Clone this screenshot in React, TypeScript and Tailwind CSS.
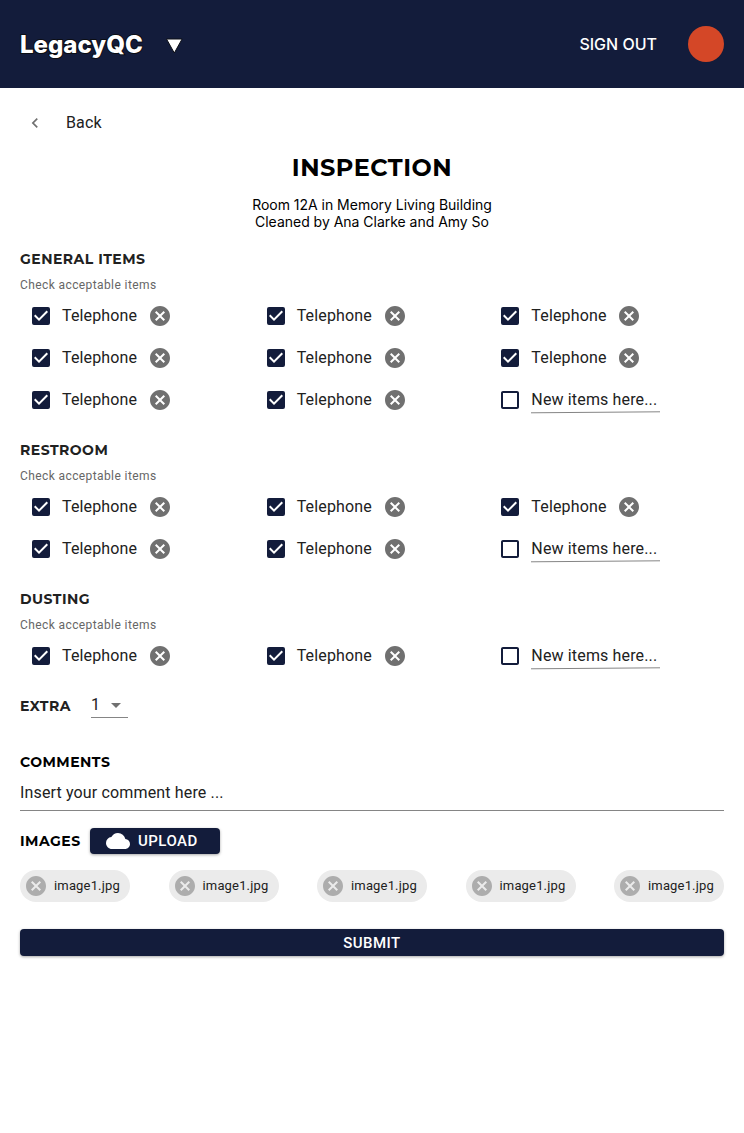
import React from "react";
import {
  MdArrowDropDown,
  MdCancel,
  MdCheckBox,
  MdCheckBoxOutlineBlank,
  MdChevronLeft,
  MdCloud,
} from "react-icons/md";

const heading =
  "font-['Montserrat','Inter',sans-serif] text-[14px] font-bold tracking-[0.48px] whitespace-nowrap";

function CheckedItem() {
  return (
    <div className="flex h-[42px] items-center">
      <span className="p-[9px]">
        <MdCheckBox className="size-6 text-[#131c3b]" />
      </span>
      <span className="w-[86px] text-[16px] leading-6 tracking-[0.15px]">Telephone</span>
      <MdCancel className="size-6 text-[#707070]" />
    </div>
  );
}

function NewItem() {
  return (
    <div className="flex h-[42px] items-center">
      <span className="p-[9px]">
        <MdCheckBoxOutlineBlank className="size-6 text-[#131c3b]" />
      </span>
      <div className="flex h-[42px] flex-col pt-[9px]">
        <span className="text-[16px] leading-6 tracking-[0.15px]">New items here...</span>
        <svg className="-mt-px h-[3px] w-[129px]" viewBox="0 0 129 3" fill="none">
          <path d="M0 1.8 129 0.8" stroke="#858585" />
        </svg>
      </div>
    </div>
  );
}

function Section({ title, count }: { title: string; count: number }) {
  return (
    <section className="mb-[19px]">
      <h2 className={`${heading} leading-5`}>{title}</h2>
      <p className="mt-1.5 mb-0 h-5 text-[12px] leading-5 tracking-[0.4px] text-[#666]">
        Check acceptable items
      </p>
      <div className="grid grid-cols-3">
        {Array.from({ length: count }, (_, i) => (
          <CheckedItem key={i} />
        ))}
        <NewItem />
      </div>
    </section>
  );
}

export default function App() {
  return (
    <div className="min-h-[1133px] bg-white font-['Roboto',sans-serif] text-[#212121]">
      <header className="flex h-[88px] items-center justify-between bg-[#131c3b] px-5 font-['Inter',sans-serif] text-white">
        <div className="flex items-center gap-[22px]">
          <span className="pt-px text-[24px] leading-[30px] font-extrabold [paint-order:stroke_fill] [-webkit-text-stroke:2px_#0c0e14]">
            LegacyQC
          </span>
          <svg className="mt-1 h-4 w-[18px]" viewBox="0 0 18 16">
            <path d="M1.5 1h15.6L9.3 15Z" fill="white" stroke="#0c0e14" />
          </svg>
        </div>
        <div className="flex items-center gap-[31px]">
          <span className="text-[16px] font-medium">SIGN OUT</span>
          <span className="size-9 rounded-full bg-[#d44727]" />
        </div>
      </header>

      <main className="px-5">
        <div className="flex h-[69px] items-center pl-[5px]">
          <MdChevronLeft className="size-5 text-[#707070]" />
          <span className="pl-[21px] text-[16px] leading-6 tracking-[0.15px]">Back</span>
        </div>

        <div className="-mt-1 text-center text-black">
          <h1 className="font-['Montserrat','Inter',sans-serif] text-[24px] leading-[30px] font-bold tracking-[0.5px]">
            INSPECTION
          </h1>
          <p className="mt-[13px] font-['Inter',sans-serif] text-[14px] leading-[17px] tracking-[-0.02px]">
            Room 12A in Memory Living Building
            <br />
            Cleaned by Ana Clarke and Amy So
          </p>
        </div>

        <div className="mt-[19px]">
          <Section title="GENERAL ITEMS" count={8} />
          <Section title="RESTROOM" count={5} />
          <Section title="DUSTING" count={2} />
        </div>

        <div className="flex h-[22px] items-start gap-5">
          <h2 className={`${heading} w-[51px] pt-px leading-[18px]`}>EXTRA</h2>
          <div className="flex h-[22px] w-[37px] items-start border-b border-[#858585]">
            <span className="w-[13px] text-[16px] leading-[18px]">1</span>
            <MdArrowDropDown className="-mt-[3px] size-6 shrink-0 text-[#707070]" />
          </div>
        </div>

        <h2 className={`${heading} mt-[34px] leading-5 text-black`}>COMMENTS</h2>
        <div className="mt-2 h-[31px] border-b border-[#858585] text-[16px] leading-[26px] tracking-[0.15px]">
          Insert your comment here ...
        </div>

        <div className="mt-[17px] flex h-[26px] items-center">
          <h2 className={`${heading} w-[70px] text-black`}>IMAGES</h2>
          <button className="flex h-[26px] w-[130px] items-center rounded bg-[#131c3b] pl-4 text-[15px] font-medium tracking-[0.46px] text-white shadow-[0_1px_3px_rgba(0,0,0,0.35)]">
            <MdCloud className="size-6" />
            <span className="pl-2">UPLOAD</span>
          </button>
        </div>

        <div className="mt-4 flex justify-between">
          {Array.from({ length: 5 }, (_, i) => (
            <div key={i} className="flex h-8 w-[110px] items-center rounded-full bg-[#ebebeb] pl-1">
              <MdCancel className="size-6 text-[#adadad]" />
              <span className="pl-1.5 text-[13px] tracking-[0.16px]">image1.jpg</span>
            </div>
          ))}
        </div>

        <button className="mt-[27px] flex h-[27px] w-full items-center justify-center rounded bg-[#131c3b] pt-px text-[15px] font-medium tracking-[0.46px] text-white shadow-[0_1px_3px_rgba(0,0,0,0.35)]">
          SUBMIT
        </button>
      </main>
    </div>
  );
}
